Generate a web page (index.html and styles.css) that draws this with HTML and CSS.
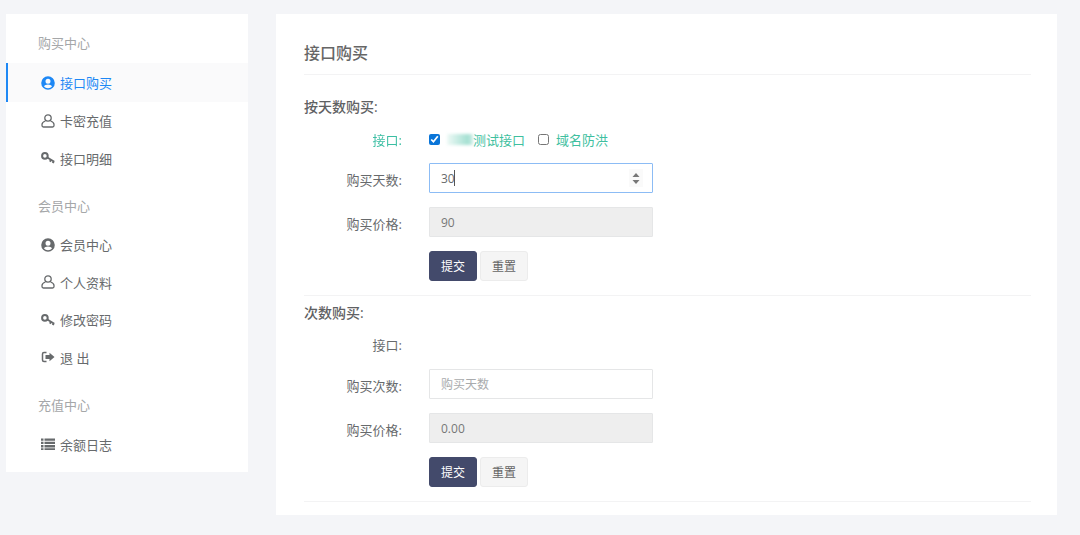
FILE: index.html
```html
<!DOCTYPE html>
<html lang="zh-CN">
<head>
<meta charset="utf-8">
<title>接口购买</title>
<link rel="stylesheet" href="styles.css">
</head>
<body>
<svg class="defs" width="0" height="0" aria-hidden="true">
  <symbol id="i-circle" viewBox="0 0 14 14"><path fill="currentColor" fill-rule="evenodd" d="M7 .2a6.8 6.8 0 1 1 0 13.6A6.8 6.8 0 0 1 7 .2zm0 2.500a2.500 2.500 0 1 0 0 5 2.500 2.500 0 0 0 0-5zM7 8.600c-1.900 0-3.300.7-4 1.800A5 5 0 0 0 7 12.200a5 5 0 0 0 4-1.800c-.7-1.100-2.100-1.800-4-1.800z"/></symbol>
  <symbol id="i-user" viewBox="0 0 14 14"><g fill="none" stroke="currentColor" stroke-width="1.300"><circle cx="7" cy="4" r="3.200"/><path d="M4.400 7C2.600 7.600 1 8.800 1 10.600v1c0 .8.600 1.400 1.400 1.400h9.200c.8 0 1.400-.6 1.400-1.400v-1C13 8.800 11.400 7.600 9.600 7"/></g></symbol>
  <symbol id="i-key" viewBox="0 0 14 14"><g fill="none" stroke="currentColor"><circle cx="3.900" cy="4.900" r="2.800" stroke-width="2"/><path d="M6.300 6.500l7 4.300M10 8.800l-1.200 1.800M12.700 10.400l-1 1.700" stroke-width="1.900"/></g></symbol>
  <symbol id="i-out" viewBox="0 0 14 14"><path fill="none" stroke="currentColor" stroke-width="1.500" d="M5.500 2.500H3c-.9 0-1.500.6-1.500 1.500v6c0 .9.600 1.500 1.500 1.500h2.500"/><path fill="currentColor" d="M8.500 2.800L13.500 7l-5 4.200V9H4.500V5h4z"/></symbol>
  <symbol id="i-list" viewBox="0 0 14 14"><path fill="currentColor" d="M0 1.500h2.500v2.300H0zM3.500 1.500H14v2.300H3.500zM0 4.800h2.500v2.300H0zM3.500 4.800H14v2.300H3.500zM0 8.100h2.500v2.300H0zM3.500 8.100H14v2.300H3.500zM0 11.300h2.500v1.800H0zM3.500 11.300H14v1.800H3.500z"/></symbol>
</svg>
<div class="page">
  <aside class="sidebar">
    <h3 class="group first">购买中心</h3>
    <a class="item active"><svg class="icon"><use href="#i-circle"/></svg>接口购买</a>
    <a class="item"><svg class="icon"><use href="#i-user"/></svg>卡密充值</a>
    <a class="item"><svg class="icon"><use href="#i-key"/></svg>接口明细</a>
    <h3 class="group">会员中心</h3>
    <a class="item"><svg class="icon"><use href="#i-circle"/></svg>会员中心</a>
    <a class="item"><svg class="icon"><use href="#i-user"/></svg>个人资料</a>
    <a class="item"><svg class="icon"><use href="#i-key"/></svg>修改密码</a>
    <a class="item"><svg class="icon"><use href="#i-out"/></svg>退 出</a>
    <h3 class="group">充值中心</h3>
    <a class="item"><svg class="icon"><use href="#i-list"/></svg>余额日志</a>
  </aside>
  <main class="content">
    <h2 class="title">接口购买</h2>
    <section class="block">
      <h4 class="subtitle">按天数购买:</h4>
      <div class="row plain">
        <span class="label green">接口:</span>
        <div class="checks">
          <label class="check"><input type="checkbox" checked><span class="smear"></span>测试接口</label>
          <label class="check"><input type="checkbox">域名防洪</label>
        </div>
      </div>
      <div class="row">
        <span class="label">购买天数:</span>
        <div class="field">
          <input class="input focus" type="text" value="30">
          <span class="caret"></span>
          <span class="spin-box"><svg class="spin" viewBox="0 0 8 12"><path d="M4 .5L7.500 4.500H.5zM4 11.500L.5 7.500h7z"/></svg></span>
        </div>
      </div>
      <div class="row">
        <span class="label">购买价格:</span>
        <input class="input disabled" type="text" value="90" disabled>
      </div>
      <div class="row buttons">
        <button class="btn primary">提交</button>
        <button class="btn">重置</button>
      </div>
    </section>
    <section class="block">
      <h4 class="subtitle">次数购买:</h4>
      <div class="row plain">
        <span class="label">接口:</span>
      </div>
      <div class="row">
        <span class="label">购买次数:</span>
        <input class="input" type="text" placeholder="购买天数">
      </div>
      <div class="row">
        <span class="label">购买价格:</span>
        <input class="input disabled" type="text" value="0.00" disabled>
      </div>
      <div class="row buttons">
        <button class="btn primary">提交</button>
        <button class="btn">重置</button>
      </div>
    </section>
  </main>
</div>
</body>
</html>
```

FILE: styles.css
```css
* { box-sizing: border-box; }
html, body { margin: 0; padding: 0; height: 100%; }
body {
  background: #f4f5f8;
  color: #676a6c;
  font-family: "Open Sans", "Noto Sans CJK SC", sans-serif;
  font-size: 13px;
  overflow: hidden;
}
.defs { position: absolute; }
.page {
  display: flex;
  align-items: flex-start;
  gap: 28px;
  padding: 14px 0 0 6px;
}
.sidebar {
  width: 242px;
  height: 458px;
  background: #fff;
  flex: none;
}
.group {
  margin: 10px 0 0;
  height: 39.500px;
  padding: 0 0 0 32px;
  line-height: 39px;
  font-size: 13px;
  font-weight: 400;
  color: #a5a7a9;
}
.group.first { margin-top: 10px; height: 39px; }
.item {
  display: flex;
  align-items: center;
  height: 37.400px;
  padding-left: 35px;
  color: #676a6c;
}
.item.active {
  height: 39px;
  background: #fafafb;
  border-left: 2px solid #1e88f5;
  padding-left: 33px;
  color: #1e88f5;
}
.icon { width: 14px; height: 14px; margin-right: 5px; flex: none; }
.content {
  width: 781px;
  height: 501px;
  background: #fff;
  padding: 0 26px 0 28px;
  flex: none;
}
.title {
  margin: 0;
  height: 61px;
  padding-top: 27px;
  line-height: 24px;
  font-size: 16px;
  font-weight: 500;
  color: #666;
  border-bottom: 1px solid #f3f3f4;
}
.block { border-bottom: 1px solid #f3f3f4; padding-bottom: 14px; }
.block:nth-of-type(1) .subtitle { margin-top: 23px; }
.block + .block .subtitle { margin-top: 8px; }
.subtitle {
  margin: 0;
  height: 17px;
  line-height: 17px;
  font-size: 14px;
  font-weight: 500;
  color: #5f6163;
}
.row {
  display: flex;
  align-items: center;
  height: 30px;
  margin-top: 14px;
}
.row.plain { height: 22px; margin-top: 13px; margin-bottom: -1px; }
.block + .block .row.plain { margin-top: 12px; margin-bottom: 0; }
.label {
  width: 98px;
  margin-right: 27px;
  padding-top: 2px;
  text-align: right;
  color: #676a6c;
  flex: none;
}
.row.plain .label { padding-top: 0; }
.label.green { color: #1ab394; opacity: .85; }
.checks { display: flex; gap: 13px; color: #3fbf9f; }
.check { display: flex; align-items: center; }
.check input {
  margin: 0 7px 0 0;
  width: 11px;
  height: 11px;
  accent-color: #0a75d8;
}
.smear {
  width: 26px;
  height: 11px;
  background: linear-gradient(90deg, #eef9f6, #a4e0d2 80%, #d0efe8);
  filter: blur(1.500px);
}
.field { position: relative; width: 224px; height: 30px; }
.input {
  width: 224px;
  height: 30px;
  padding: 1px 11px 0;
  border: 1px solid #e5e6e7;
  border-radius: 1px;
  background: #fff;
  color: #676a6c;
  font: inherit;
  font-size: 12px;
  outline: none;
}
.input::placeholder { color: #a9abad; }
.input.focus { border-color: #8cbcf5; }
.input.disabled { background: #eee; color: #777; }
.caret {
  position: absolute;
  left: 25px;
  top: 7px;
  width: 1px;
  height: 16px;
  background: #555;
}
.spin-box {
  position: absolute;
  right: 10px;
  top: 6px;
  width: 14px;
  height: 18px;
  display: flex;
  align-items: center;
  justify-content: center;
  background: #fafafa;
}
.spin {
  width: 8px;
  height: 13px;
  fill: #777;
}
.buttons { gap: 3px; padding-left: 125px; }
.btn {
  width: 48px;
  height: 30px;
  padding: 0;
  border: 1px solid #ececec;
  border-radius: 3px;
  background: #f5f5f5;
  color: #666;
  font: inherit;
  font-size: 12px;
}
.btn.primary {
  background: #434a6b;
  border-color: #434a6b;
  color: #fff;
}
```
